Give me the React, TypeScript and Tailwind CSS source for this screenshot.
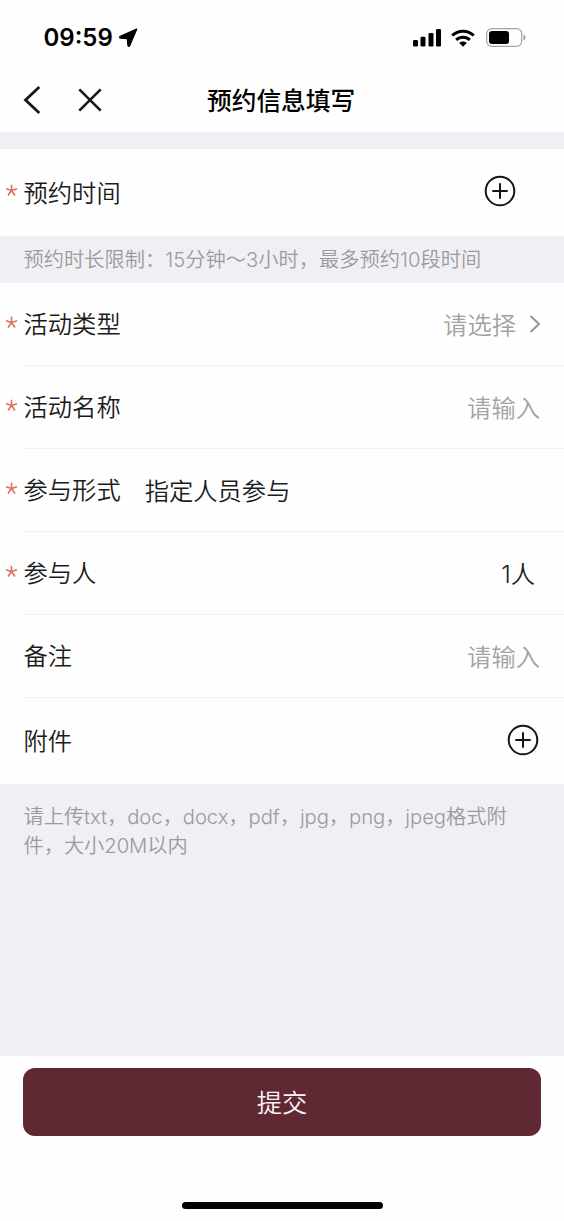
import type { ReactNode } from "react";

interface RowProps {
  label: string;
  required?: boolean;
  className?: string;
  divider?: boolean;
  children?: ReactNode;
}

function Row({ label, required, className = "h-[83px]", divider = true, children }: RowProps) {
  return (
    <div className={`flex pl-[5px] bg-[#fefefe] ${className}`}>
      <span className="w-[18.5px] shrink-0 flex items-center">
        {required && <Asterisk />}
      </span>
      <div
        className={`flex-1 flex items-center border-b ${divider ? "border-[#f2f3f4]" : "border-transparent"}`}
      >
        <span className="whitespace-nowrap">{label}</span>
        {children}
      </div>
    </div>
  );
}

function Asterisk() {
  return (
    <svg className="w-[13px] h-[13px] mb-[5px]" viewBox="0 0 13 13" fill="none" stroke="#d9735a" strokeWidth="1.6">
      <path d="M6.5 6.5V.7M6.5 6.5L1 4.8M6.5 6.5L12 4.8M6.5 6.5l-3.5 5M6.5 6.5l3.5 5" />
    </svg>
  );
}

function PlusCircle({ className = "" }: { className?: string }) {
  return (
    <svg className={`w-8 h-8 ml-auto ${className}`} viewBox="0 0 32 32" fill="none" stroke="#151515" strokeWidth="2">
      <circle cx="16" cy="16" r="14.3" />
      <path d="M16 8.3v15.4M8.3 16h15.4" />
    </svg>
  );
}

function StatusBar() {
  return (
    <div className="h-[68px] flex items-center pt-[7px] pl-[43.5px] pr-[38px]">
      <span className="font-semibold text-[24px] leading-6 text-black">09:59</span>
      <svg className="w-[19px] h-[19px] ml-[6px]" viewBox="0 0 19 19">
        <path
          d="M17.6 1.2L1.3 8.5c-.8.4-.7 1.5.2 1.6l6.9.4.6 7c.1.9 1.2 1 1.6.2z"
          fill="#000"
          stroke="#000"
          strokeWidth="1.4"
          strokeLinejoin="round"
        />
      </svg>
      <div className="flex items-center ml-auto">
        <svg className="w-[29px] h-[18px]" viewBox="0 0 29 18">
          <rect x="0" y="11" width="5" height="6.5" rx="1.3" />
          <rect x="7.5" y="7.7" width="5" height="9.8" rx="1.3" />
          <rect x="15.5" y="4" width="5" height="13.5" rx="1.3" />
          <rect x="23" y="0" width="5" height="17.5" rx="1.3" />
        </svg>
        <svg className="w-6 h-[18px] ml-[9px]" viewBox="0 0 24 18" fill="none" stroke="#000" strokeWidth="3">
          <path d="M1.2 6.5C7.2.7 16.8.7 22.8 6.5" />
          <path d="M5.2 10.9c3.8-3.7 9.8-3.7 13.6 0" />
          <path d="M8.2 14.1c2-2 5.6-2 7.6 0L12 17.8z" fill="#000" stroke="none" />
        </svg>
        <svg className="w-10 h-[19px] ml-[11px]" viewBox="0 0 40 19">
          <rect x="0.7" y="0.7" width="35" height="17.6" rx="5" fill="none" stroke="#a3a3a3" strokeWidth="1.2" />
          <rect x="3" y="3" width="20" height="13" rx="3" />
          <path d="M37.5 6.5c2.6.8 2.6 5.2 0 6z" fill="#999" />
        </svg>
      </div>
    </div>
  );
}

function NavBar() {
  return (
    <div className="h-16 flex items-center">
      <svg className="w-[18px] h-[30px] ml-[23px]" viewBox="0 0 18 30" fill="none" stroke="#181818" strokeWidth="2.8">
        <path d="M16.3 2L2.5 15l13.8 13" />
      </svg>
      <svg className="w-6 h-6 ml-[37px]" viewBox="0 0 24 24" fill="none" stroke="#181818" strokeWidth="2.6">
        <path d="M1.3 1.3l21.4 21.4M22.7 1.3L1.3 22.7" />
      </svg>
      <h1 className="ml-[105px] mt-0.5 font-medium text-[24.7px] text-black">预约信息填写</h1>
    </div>
  );
}

export default function App() {
  return (
    <div className="w-[564px] h-[1221px] flex flex-col bg-[#f0eff4] text-[24.3px] leading-8 font-[350] text-[#1b1b1b] font-['Inter','Noto_Sans_CJK_SC',sans-serif]">
      <header className="h-[132px] bg-[#fefefe]">
        <StatusBar />
        <NavBar />
      </header>

      <Row label="预约时间" required divider={false} className="mt-[17px] h-[87px] pt-px">
        <PlusCircle className="mr-12 mb-[3px]" />
      </Row>
      <p className="h-[47px] pl-[23.5px] pt-px flex items-center text-[20.25px] text-[#9b9a9f]">
        预约时长限制：15分钟～3小时，最多预约10段时间
      </p>

      <main>
        <Row label="活动类型" required>
          <span className="ml-auto pt-px text-[#a2a2a2]">请选择</span>
          <svg className="w-3 h-5 ml-[13px] mr-[23px]" viewBox="0 0 12 20" fill="none" stroke="#969696" strokeWidth="2">
            <path d="M1.5 2L10 10l-8.5 8" />
          </svg>
        </Row>
        <Row label="活动名称" required>
          <span className="ml-auto mr-6 pt-px text-[#a2a2a2]">请输入</span>
        </Row>
        <Row label="参与形式" required>
          <span className="ml-6 pt-px">指定人员参与</span>
        </Row>
        <Row label="参与人" required>
          <span className="ml-auto mr-[29px] pt-px">1人</span>
        </Row>
        <Row label="备注">
          <span className="ml-auto mr-6 pt-px text-[#a2a2a2]">请输入</span>
        </Row>
        <Row label="附件" divider={false} className="h-[86px]">
          <PlusCircle className="mr-[25px] mb-0.5" />
        </Row>
      </main>
      <p className="pt-[18px] pl-[23.5px] pr-[50px] text-[20.25px] leading-[29px] tracking-[-0.06px] text-[#9b9a9f]">
        请上传txt，doc，docx，pdf，jpg，png，jpeg格式附件，大小20M以内
      </p>

      <footer className="mt-auto h-[165px] px-[23px] pt-[12px] pb-3 flex flex-col items-center bg-[#fefefe]">
        <button className="w-full h-[68px] pt-0.5 rounded-xl bg-[#602832] text-[25.3px] text-[#fbf3f4]">提交</button>
        <div className="mt-auto w-[201px] h-[7px] rounded-full bg-black" />
      </footer>
    </div>
  );
}
